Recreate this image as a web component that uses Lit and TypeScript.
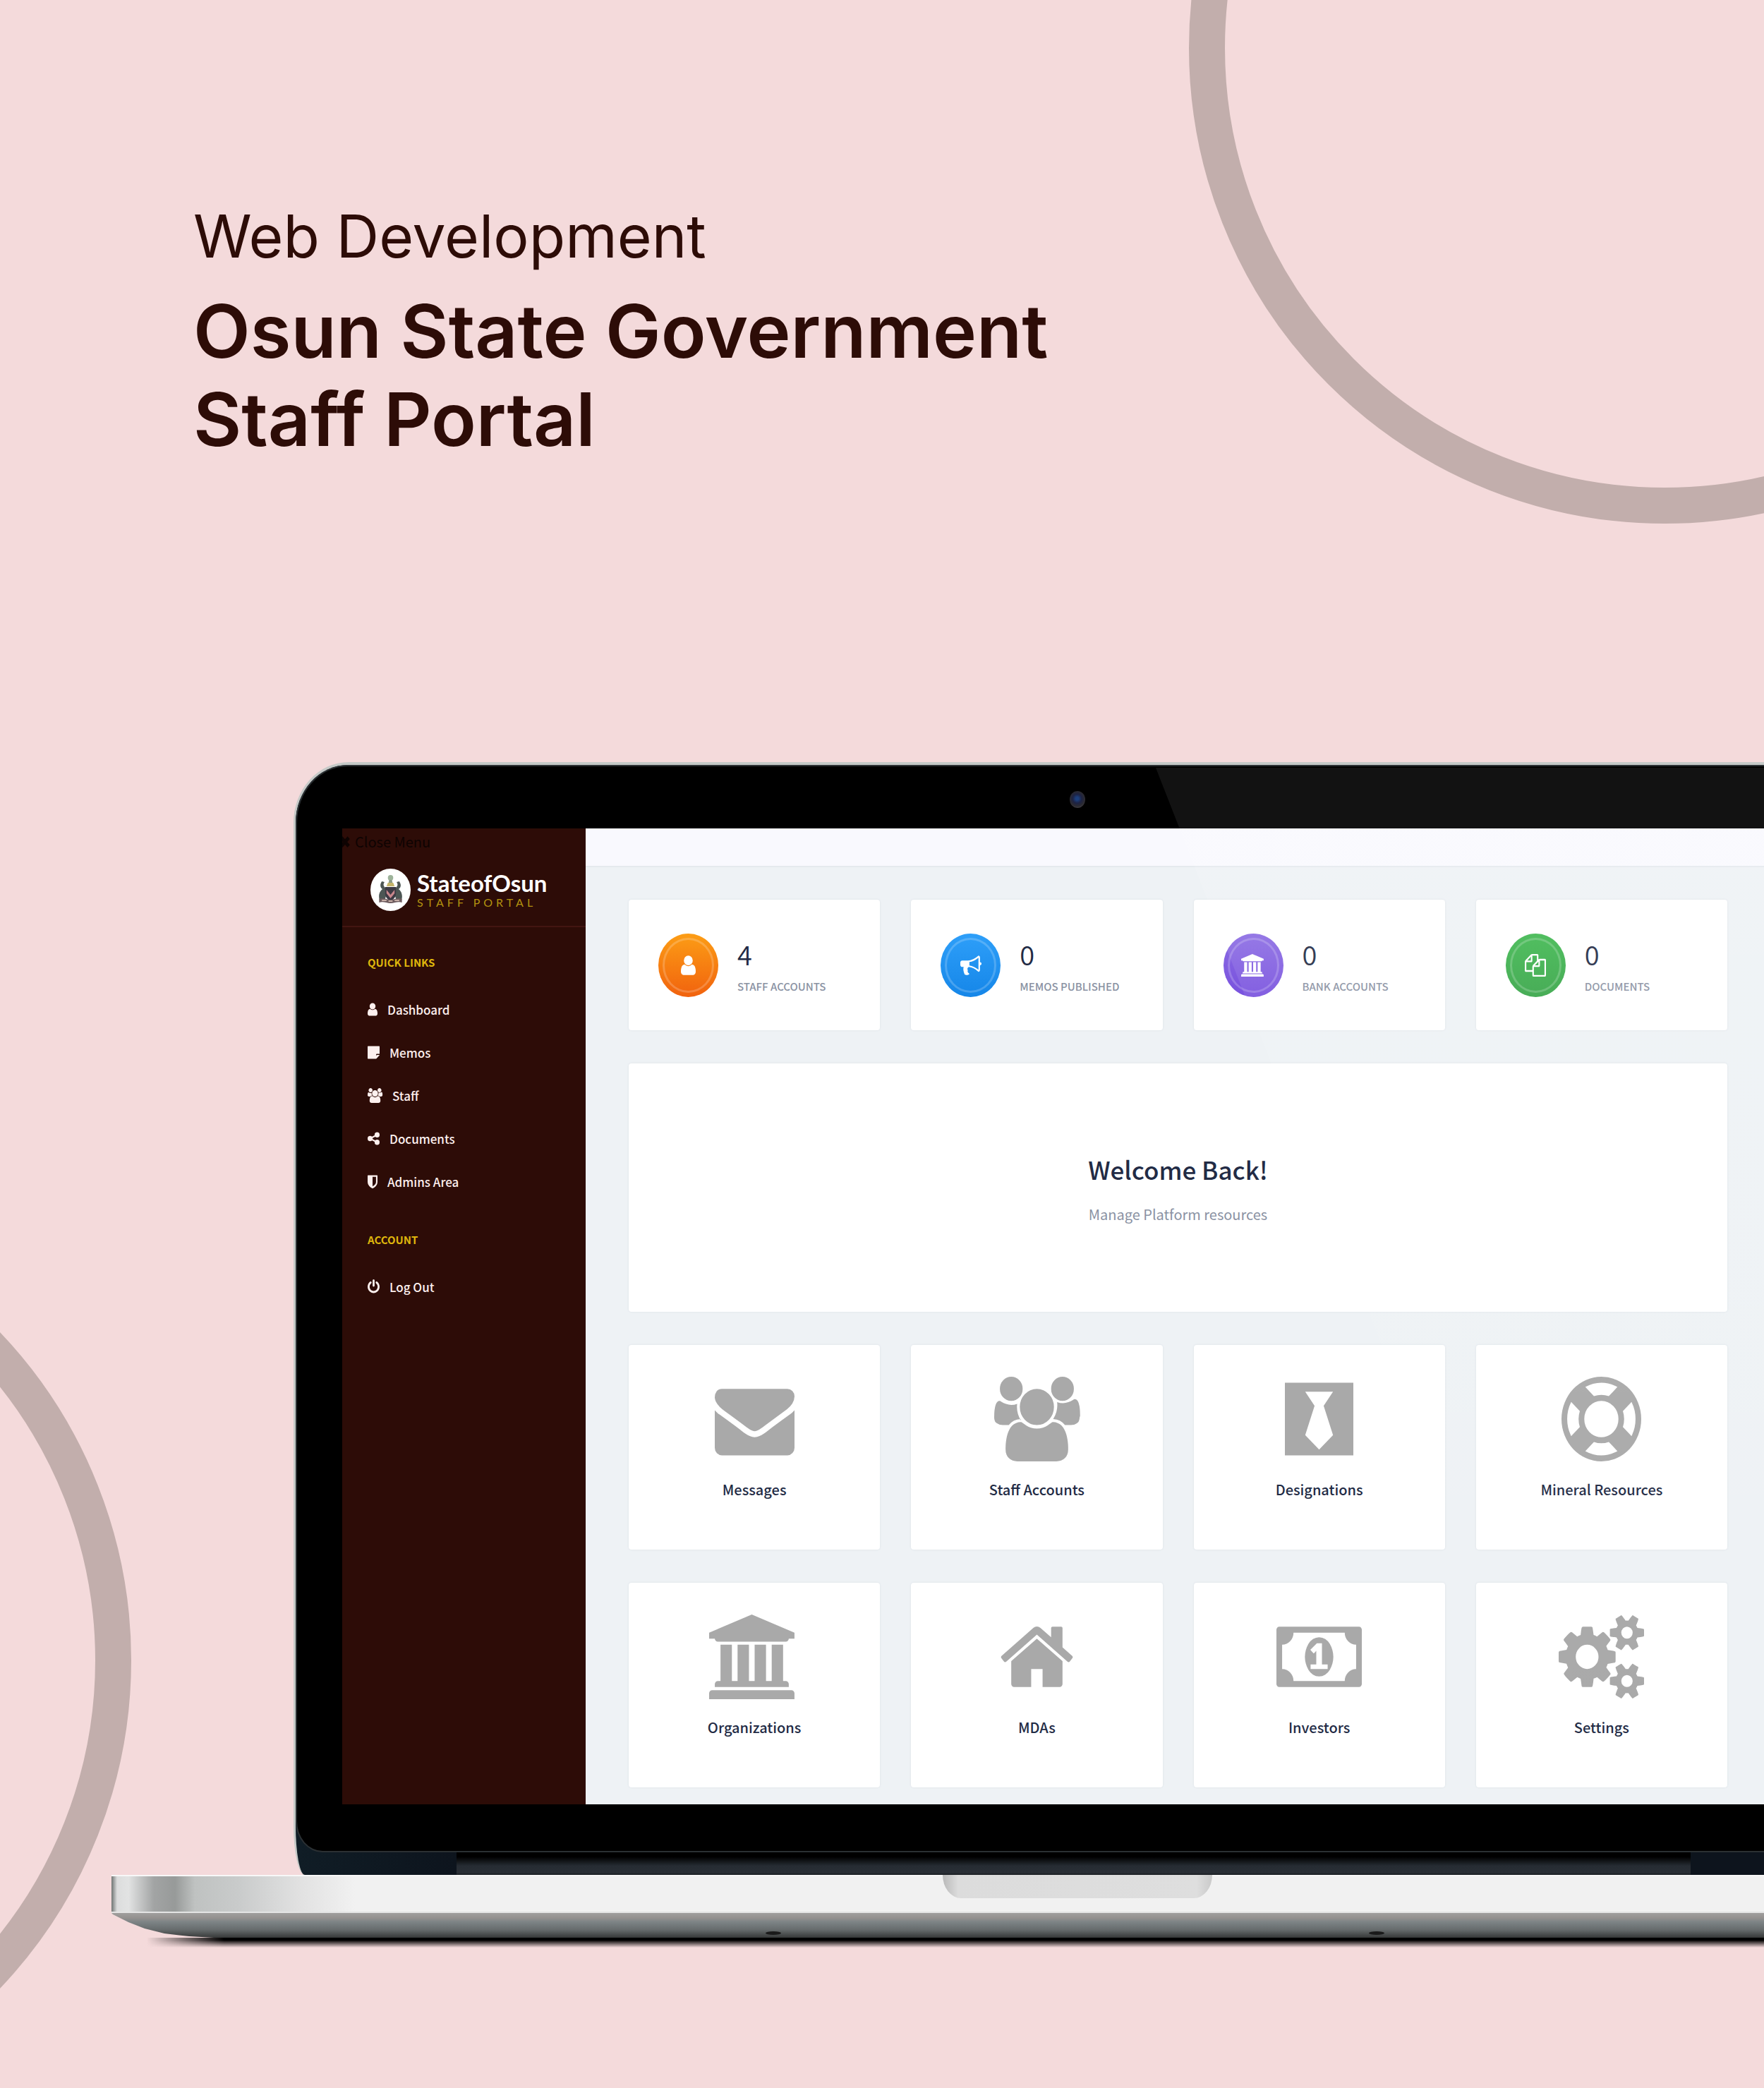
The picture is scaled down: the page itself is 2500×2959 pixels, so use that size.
import { LitElement, html, css, svg } from "lit";
import { customElement, property } from "lit/decorators.js";

/* Glyphs are drawn in a 1792-unit em; `w` is the advance width. */
const GLYPHS: Record<string, { w: number; x?: number; shape: unknown }> = {
  user: { w: 1280, x: 256, shape: svg`<path d="M1536 1399q0 109-62.5 187t-150.5 78h-854q-88 0-150.5-78t-62.5-187q0-85 8.5-160.5t31.5-152 58.5-131 94-89 134.5-34.5q131 128 313 128t313-128q76 0 134.5 34.5t94 89 58.5 131 31.5 152 8.5 160.5zm-256-887q0 159-112.5 271.5t-271.5 112.5-271.5-112.5-112.5-271.5 112.5-271.5 271.5-112.5 271.5 112.5 112.5 271.5z"/>` },
  users: { w: 1920, x: 64, shape: svg`<path d="M657 896q-162 5-265 128h-134q-82 0-138-40.5t-56-118.5q0-353 124-353 6 0 43.5 21t97.5 42.5 119 21.5q67 0 133-23-5 37-5 66 0 159 93 294zm1071 637q0 120-73 189.5t-194 69.5h-874q-121 0-194-69.5t-73-189.5q0-53 3.5-103.5t14-109 26.5-108.5 43-97.5 62-81 85.5-53.5 111.5-20q10 0 43 21.5t73 48 107 48 135 21.5 135-21.5 107-48 73-48 43-21.5q61 0 111.5 20t85.5 53.5 62 81 43 97.5 26.5 108.5 14 109 3.5 103.5zm-1024-1277q0 106-75 181t-181 75-181-75-75-181 75-181 181-75 181 75 75 181zm704 384q0 159-112.5 271.5t-271.5 112.5-271.5-112.5-112.5-271.5 112.5-271.5 271.5-112.5 271.5 112.5 112.5 271.5zm576 225q0 78-56 118.5t-138 40.5h-134q-103-123-265-128 93-135 93-294 0-29-5-66 66 23 133 23 59 0 119-21.5t97.5-42.5 43.5-21q124 0 124 353zm-128-609q0 106-75 181t-181 75-181-75-75-181 75-181 181-75 181 75 75 181z"/>` },
  bullhorn: { w: 1792, shape: svg`<path d="M1664 640q53 0 90.5 37.5t37.5 90.5-37.5 90.5-90.5 37.5v384q0 52-38 90t-90 38q-417-347-812-380-58 19-91 66t-31 100.5 40 92.5q-20 33-23 65.5t6 58 33.5 55 48 50 61.5 50.5q-29 58-111.5 83t-168.5 11.5-132-55.5q-7-23-29.5-87.5t-32-94.5-23-89-15-101 3.5-98.5 22-110.5h-122q-66 0-113-47t-47-113v-192q0-66 47-113t113-47h480q435 0 896-384 52 0 90 38t38 90v384zm-128 604v-954q-394 302-768 343v270q377 42 768 341z"/>` },
  files: { w: 1792, shape: svg`<path d="M1696 384q40 0 68 28t28 68v1216q0 40-28 68t-68 28h-960q-40 0-68-28t-28-68v-288h-544q-40 0-68-28t-28-68v-672q0-40 20-88t48-76l408-408q28-28 76-48t88-20h416q40 0 68 28t28 68v328q68-40 128-40h416zm-544 213l-299 299h299v-299zm-640-384l-299 299h299v-299zm196 647l316-316v-416h-384v416q0 40-28 68t-68 28h-416v640h512v-256q0-40 20-88t48-76zm956 804v-1152h-384v416q0 40-28 68t-68 28h-416v640h896z"/>` },
  bank: { w: 2048, shape: svg`<path d="M960 0l960 384v128h-128q0 26-20.5 45t-48.5 19h-1526q-28 0-48.5-19t-20.5-45h-128v-128zm-704 640h256v768h128v-768h256v768h128v-768h256v768h128v-768h256v768h59q28 0 48.5 19t20.5 45v64h-1664v-64q0-26 20.5-45t48.5-19h59v-768zm1595 960q28 0 48.5 19t20.5 45v128h-1920v-128q0-26 20.5-45t48.5-19h1782z"/>` },
  envelope: { w: 1792, shape: svg`<path d="M1792 710v794q0 66-47 113t-113 47h-1472q-66 0-113-47t-47-113v-794q44 49 101 87 362 246 497 345 57 42 92.5 65.5t94.5 48 110 24.5h2q51 0 110-24.5t94.5-48 92.5-65.5q170-123 498-345 57-39 100-87zm0-294q0 79-49 151t-122 123q-376 261-468 325-10 7-42.5 31t-54 38.5-52 32.5-57.5 27-50 9h-2q-23 0-50-9t-57.5-27-52-32.5-54-38.5-42.5-31q-91-64-262-182.5t-205-142.5q-62-42-117-115.5t-55-136.5q0-78 41.5-130t118.5-52h1472q65 0 112.5 47t47.5 113z"/>` },
  tie: { w: 1536, shape: svg`<path d="M0 128h1536v1536h-1536zM456 316l210 300-210 618 312 306 312-306-210-618 210-300z"/>` },
  ring: { w: 1792, shape: svg`<path d="M896 0q182 0 348 71t286 191 191 286 71 348-71 348-191 286-286 191-348 71-348-71-286-191-191-286-71-348 71-348 191-286 286-191 348-71zm0 128q-190 0-361 90l194 194q82-28 167-28t167 28l194-194q-171-90-361-90zm-678 1129l194-194q-28-82-28-167t28-167l-194-194q-90 171-90 361t90 361zm678 407q190 0 361-90l-194-194q-82 28-167 28t-167-28l-194 194q171 90 361 90zm0-384q159 0 271.5-112.5t112.5-271.5-112.5-271.5-271.5-112.5-271.5 112.5-112.5 271.5 112.5 271.5 271.5 112.5zm484-217l194 194q90-171 90-361t-90-361l-194 194q28 82 28 167t-28 167z"/>` },
  home: { w: 1792, shape: svg`<path d="M1472 992v480q0 26-19 45t-45 19h-384v-384h-256v384h-384q-26 0-45-19t-19-45v-480q0-1 .5-3t.5-3l575-474 575 474q1 2 1 6zm223-69l-62 74q-8 9-21 11h-3q-13 0-21-7l-692-577-692 577q-12 8-24 7-13-2-21-11l-62-74q-8-10-7-23.5t11-21.5l719-599q32-26 76-26t76 26l244 204v-195q0-14 9-23t23-9h192q14 0 23 9t9 23v408l219 182q10 8 11 21.5t-7 23.5z"/>` },
  money: { w: 1920, shape: svg`<path d="M768 1152h384v-96h-128v-448h-114l-148 137 77 80q42-37 55-57h2v288h-128v96zm512-256q0 70-21 142t-59.5 134-101.5 101-138 39-138-39-101.5-101-59.5-134-21-142 21-142 59.5-134 101.5-101 138-39 138 39 101.5 101 59.5 134 21 142zm512 256v-512q-106 0-181-75t-75-181h-1152q0 106-75 181t-181 75v512q106 0 181 75t75 181h1152q0-106 75-181t181-75zm128-832v1152q0 26-19 45t-45 19h-1792q-26 0-45-19t-19-45v-1152q0-26 19-45t45-19h1792q26 0 45 19t19 45z"/>` },
  cogs: { w: 1920, shape: svg`<path d="M896 896q0-106-75-181t-181-75-181 75-75 181 75 181 181 75 181-75 75-181zm768 512q0-52-38-90t-90-38-90 38-38 90q0 53 37.5 90.5t90.5 37.5 90.5-37.5 37.5-90.5zm0-1024q0-52-38-90t-90-38-90 38-38 90q0 53 37.5 90.5t90.5 37.5 90.5-37.5 37.5-90.5zm-384 421v185q0 10-7 19.5t-16 10.5l-155 24q-11 35-32 76 34 48 90 115 7 11 7 20 0 12-7 19-23 30-82.5 89.5t-78.5 59.5q-11 0-21-7l-115-90q-37 19-77 31-11 108-23 155-7 24-30 24h-186q-11 0-20-7.5t-10-17.5l-23-153q-34-10-75-31l-118 89q-7 7-20 7-11 0-21-8-144-133-144-160 0-9 7-19 10-14 41-53t47-61q-23-44-35-82l-152-24q-10-1-17-9.5t-7-19.5v-185q0-10 7-19.5t16-10.5l155-24q11-35 32-76-34-48-90-115-7-11-7-20 0-12 7-20 22-30 82-89t79-59q11 0 21 7l115 90q34-18 77-32 11-108 23-154 7-24 30-24h186q11 0 20 7.5t10 17.5l23 153q34 10 75 31l118-89q8-7 20-7 11 0 21 8 144 133 144 160 0 8-7 19-12 16-42 54t-45 60q23 48 34 82l152 23q10 2 17 10.5t7 19.5zm640 533v140q0 16-149 31-12 27-30 52 51 113 51 138 0 4-4 7-122 71-124 71-8 0-46-47t-52-68q-20 2-30 2t-30-2q-14 21-52 68t-46 47q-2 0-124-71-4-3-4-7 0-25 51-138-18-25-30-52-149-15-149-31v-140q0-16 149-31 13-29 30-52-51-113-51-138 0-4 4-7 4-2 35-20t59-34 30-16q8 0 46 46.5t52 67.5q20-2 30-2t30 2q51-71 92-112l6-2q4 0 124 70 4 3 4 7 0 25-51 138 17 23 30 52 149 15 149 31zm0-1024v140q0 16-149 31-12 27-30 52 51 113 51 138 0 4-4 7-122 71-124 71-8 0-46-47t-52-68q-20 2-30 2t-30-2q-14 21-52 68t-46 47q-2 0-124-71-4-3-4-7 0-25 51-138-18-25-30-52-149-15-149-31v-140q0-16 149-31 13-29 30-52-51-113-51-138 0-4 4-7 4-2 35-20t59-34 30-16q8 0 46 46.5t52 67.5q20-2 30-2t30 2q51-71 92-112l6-2q4 0 124 70 4 3 4 7 0 25-51 138 17 23 30 52 149 15 149 31z"/>` },
  note: { w: 1536, shape: svg`<path d="M64 128h1408q64 0 64 64v864h-352q-96 0-96 96v512h-1024q-64 0-64-64v-1408q0-64 64-64zM1216 1184h310q-14 60-50 98l-330 330q-30 30-58 44v-344q0-128 128-128z"/>` },
  share: { w: 1536, shape: svg`<path d="M320 896 1216 448M320 896 1216 1344" fill="none" stroke="currentColor" stroke-width="190"/><circle cx="320" cy="896" r="320"/><circle cx="1216" cy="448" r="320"/><circle cx="1216" cy="1344" r="320"/>` },
  shield: { w: 1280, shape: svg`<path d="M64 128h1152q64 0 64 64v768q0 260-200 470-170 180-440 298-270-118-440-298-200-210-200-470v-768q0-64 64-64zM640 320v1150q190-100 310-220 138-140 138-290v-640z"/>` },
  power: { w: 1536, x: 128, shape: svg`<path fill-rule="nonzero" d="M1664 896q0 156-61 298t-164 245-245 164-298 61-298-61-245-164-164-245-61-298q0-182 80.5-343t226.5-270q43-32 95.5-25t83.5 50q32 42 24.5 94.5t-49.5 84.5q-98 74-151.5 181t-53.5 228q0 104 40.5 198.5t109.5 163.5 163.5 109.5 198.5 40.5 198.5-40.5 163.5-109.5 109.5-163.5 40.5-198.5q0-121-53.5-228t-151.5-181q-42-32-49.5-84.5t24.5-94.5q31-43 84-50t95 25q146 109 226.5 270t80.5 343zm-640-768v640q0 52-38 90t-90 38-90-38-38-90v-640q0-52 38-90t90-38 90 38 38 90z"/>` },
  times: { w: 1408, shape: svg`<path d="M250 450 1158 1358M1158 450 250 1358" fill="none" stroke="currentColor" stroke-width="400"/>` },
};

/* `em` is the horizontal em in pixels, `high` the vertical one. */
const glyph = (name: string, em: number, high: number) => {
  const g = GLYPHS[name];
  return html`<svg
    class="glyph"
    aria-hidden="true"
    width=${Math.round((g.w / 1792) * em)}
    height=${high}
    viewBox="${g.x ?? 0} 0 ${g.w} 1792"
    preserveAspectRatio="none"
    fill="currentColor"
    fill-rule="evenodd"
  >${g.shape}</svg>`;
};

const shared = css`
  * { box-sizing: border-box; margin: 0; padding: 0; }
  a { color: inherit; text-decoration: none; }
  .glyph { display: block; flex: none; overflow: visible; }
`;

const crest = svg`
  <circle cx="30" cy="30" r="30" fill="#fff"/>
  <circle cx="30" cy="13" r="4" fill="#9db39a"/>
  <path d="M28 16h4l1 4h-6z" fill="#8b9a86"/>
  <path d="M26 20h8l2 5H24z" fill="#c4b46a"/>
  <path d="M14 46c-3-9 0-14 4-17-4-2-4-7-1-11l4 1c-3 4-1 7 3 9l1 5-4 13zM46 46c3-9 0-14-4-17 4-2 4-7 1-11l-4 1c3 4 1 7-3 9l-1 5 4 13z" fill="#4d5654"/>
  <path d="M22 26h16v9c0 6-4 9-8 11-4-2-8-5-8-11z" fill="#3d3a44"/>
  <path d="M24 30l6 7 6-7v5l-6 7-6-7z" fill="#c9868c"/>
  <path d="M13 43c6-3 11 1 17 1s11-4 17-1v5c-6-2-11 1-17 1s-11-3-17-1z" fill="#6d5b5e"/>
  <path d="M17 45h7M27 46h6M36 45h7" stroke="#c8b0a8" stroke-width="2"/>
`;

@customElement("portal-sidebar")
class PortalSidebar extends LitElement {
  static styles = [shared, css`
    :host { display: block; background: #2d0c07; color: #fff; font-family: "Noto Sans CJK SC", "Noto Sans", sans-serif; }
    .close { display: flex; align-items: center; gap: 6px; height: 38px; margin-left: -4px; border: 0; background: none; color: #0e0302; font: 20px/38px "Noto Sans CJK SC", sans-serif; }
    .brand { display: flex; align-items: center; gap: 9px; height: 102px; padding: 0 40px 2px; border-bottom: 2px solid #431511; }
    .crest { flex: none; }
    .words { padding-bottom: 2px; }
    .name { font: 700 33px/38px "Lato", sans-serif; }
    .sub { font: 16px/18px "Lato", sans-serif; letter-spacing: 5px; color: #b3920f; white-space: nowrap; }
    .group { padding: 30px 36px 2px; }
    .group h2 { font-size: 15px; line-height: 40px; font-weight: 700; color: #dfb60c; }
    .group ul { list-style: none; padding-top: 16px; }
    .link { display: flex; align-items: center; gap: 14px; height: 61px; font-size: 17px; font-weight: 500; color: #fdf0ee; }
  `];

  private group(title: string, links: [string, string][]) {
    return html`<section class="group">
      <h2>${title}</h2>
      <ul>${links.map(([icon, label]) => html`<li><a class="link" href="#">${glyph(icon, 20, 21)}<span>${label}</span></a></li>`)}</ul>
    </section>`;
  }

  render() {
    return html`
      <button class="close" type="button">${glyph("times", 20, 24)}<span>Close Menu</span></button>
      <a class="brand" href="#">
        <svg class="crest" aria-hidden="true" width="57" height="60" viewBox="0 0 60 60" preserveAspectRatio="none">${crest}</svg>
        <div class="words"><div class="name">StateofOsun</div><div class="sub">STAFF PORTAL</div></div>
      </a>
      <nav>
        ${this.group("QUICK LINKS", [["user", "Dashboard"], ["note", "Memos"], ["users", "Staff"], ["share", "Documents"], ["shield", "Admins Area"]])}
        ${this.group("ACCOUNT", [["power", "Log Out"]])}
      </nav>`;
  }
}

@customElement("stat-card")
class StatCard extends LitElement {
  @property() icon = "user";
  @property() tone = "orange";
  @property() value = "0";
  @property() label = "";

  static styles = [shared, css`
    :host { display: block; background: #fff; border-radius: 4px; box-shadow: 0 0 2px 1px #e4e9ed; font-family: "Noto Sans CJK SC", "Noto Sans", sans-serif; }
    .card { display: flex; align-items: center; gap: 27px; height: 185px; padding: 0 42px; }
    .badge { flex: none; width: 85px; height: 90px; padding: 6px; border-radius: 50%; color: #fff; }
    .rim { display: flex; align-items: center; justify-content: center; height: 100%; border: 3px solid rgba(255, 255, 255, 0.2); border-radius: 50%; }
    .orange { background: linear-gradient(#fc9d15, #f1620e); }
    .blue { background: linear-gradient(#2e9ff9, #1586e8); }
    .purple { background: linear-gradient(#8b6ce3, #7851de); }
    .green { background: linear-gradient(#40b850, #37a548); }
    .text { padding-top: 10px; }
    .value { font-size: 38px; line-height: 50px; font-weight: 350; color: #222b45; }
    .label { font-size: 15px; line-height: 42px; font-weight: 500; color: #8a92a3; white-space: nowrap; }
  `];

  render() {
    return html`<div class="card">
      <div class="badge ${this.tone}"><div class="rim">${glyph(this.icon, 30, 32)}</div></div>
      <div class="text"><div class="value">${this.value}</div><div class="label">${this.label}</div></div>
    </div>`;
  }
}

@customElement("portal-tile")
class PortalTile extends LitElement {
  @property() icon = "home";
  @property() label = "";

  static styles = [shared, css`
    :host { display: block; height: 290px; background: #fff; border-radius: 4px; box-shadow: 0 0 2px 1px #e4e9ed; font-family: "Noto Sans CJK SC", "Noto Sans", sans-serif; }
    .tile { display: flex; flex-direction: column; align-items: center; gap: 24px; height: 100%; padding-top: 45px; color: #a9a9a9; }
    .label { font-size: 20px; line-height: 32px; font-weight: 500; color: #222b45; }
  `];

  render() {
    return html`<a class="tile" href="#">${glyph(this.icon, 113, 120)}<span class="label">${this.label}</span></a>`;
  }
}

const STATS = [
  { icon: "user", tone: "orange", value: "4", label: "STAFF ACCOUNTS" },
  { icon: "bullhorn", tone: "blue", value: "0", label: "MEMOS PUBLISHED" },
  { icon: "bank", tone: "purple", value: "0", label: "BANK ACCOUNTS" },
  { icon: "files", tone: "green", value: "0", label: "DOCUMENTS" },
];

const TILES = [
  ["envelope", "Messages"], ["users", "Staff Accounts"], ["tie", "Designations"], ["ring", "Mineral Resources"],
  ["bank", "Organizations"], ["home", "MDAs"], ["money", "Investors"], ["cogs", "Settings"],
];

@customElement("app-root")
class AppRoot extends LitElement {
  static styles = [shared, css`
    :host { display: block; position: relative; overflow: hidden; min-height: 100vh; background: #f4dadb; color: #2d0c07; }
    .ring { position: absolute; width: 1348px; height: 1348px; border: 51px solid #c2aeac; border-radius: 50%; }
    .ring-top { top: -606px; right: -533px; }
    .ring-left { top: 1679px; left: -1162px; }
    .intro { position: relative; padding: 280px 274px 0; height: 1080px; }
    .kicker { font: 400 84px/110px "Inter", sans-serif; }
    .title { font: 600 105px/125px "Inter", sans-serif; padding-top: 16px; max-width: 1400px; }

    .lid { position: relative; margin-left: 416px; padding: 90px 0 100px 66px; background: linear-gradient(90deg, #101d26, #0d141d 229px, #0d141d); border-radius: 78px 0 0 16px / 86px 0 0 70px; border: solid #c5c9c7; border-width: 4px 0 0 3px; }
    .panel { position: absolute; inset: 0 0 32px 0; background: #000; border: solid #2b3033; border-width: 2px 0 2px 2px; border-radius: 74px 0 0 38px / 82px 0 0 44px; }
    .hinge { position: absolute; left: 228px; right: 104px; bottom: 0; height: 32px; background: linear-gradient(#000 20%, #262c33 60%, #2a2f36 90%, #1a1e22); }
    .camera { position: absolute; left: 53%; top: 37px; width: 22px; height: 24px; margin-left: -6px; border-radius: 50%; background: radial-gradient(circle at 48% 45%, #1c3f7c 0 12%, #1d2344 36%, #2b2a31 60%, #3c3a40 75%); }
    .glare { position: absolute; inset: 4px 0 32px 0; background: linear-gradient(rgba(255, 255, 255, 0.07), rgba(255, 255, 255, 0.07) 86px, rgba(255, 255, 255, 0.1) 86px, rgba(255, 255, 255, 0) 92%); clip-path: polygon(1219px 0, 100% 0, 100% 100%, 1820px 100%); pointer-events: none; }

    .screen { position: relative; display: grid; grid-template-columns: 345px 1fr; overflow: hidden; }
    .main { background: #eef2f5; }
    .topbar { height: 55px; background: #f9f9fe; border-bottom: 2px solid #e5eaee; }
    .grid { display: grid; grid-template-columns: repeat(4, 1fr); gap: 47px 44px; padding: 46px 52px 24px 61px; }
    .welcome { grid-column: 1 / -1; height: 352px; display: flex; flex-direction: column; align-items: center; justify-content: center; gap: 18px; padding-top: 6px; background: #fff; border-radius: 4px; box-shadow: 0 0 2px 1px #e4e9ed; font-family: "Noto Sans CJK SC", "Noto Sans", sans-serif; }
    .welcome h2 { font-size: 35px; line-height: 52px; font-weight: 500; color: #222b45; }
    .welcome p { font-size: 20px; line-height: 40px; color: #8a92a3; }

    .base { position: relative; margin-left: 158px; }
    .deck { height: 54px; background: linear-gradient(90deg, #6f7573, #dcdddd 8px, #e2e3e3 24px, #a2a4a4 60px, #979a99 90px, #bfc2c1 118px, #c9cbcb 180px, #e2e2e2 270px, #f1f1f1 345px); border-top: 2px solid #f8f8f8; border-bottom: 2px solid #e4e4e4; }
    .notch { position: absolute; left: 50.3%; top: 0; width: 382px; height: 33px; background: linear-gradient(90deg, #b9b9b9, #dcdcdc 22px, #dedede 360px, #c9c9c9); border-radius: 0 0 26px 26px / 0 0 33px 33px; }
    .under { height: 35px; background: linear-gradient(#a09f9e, #94918f 20%, #7d8486 36%, #666b6c 68%, #363838); clip-path: polygon(0 0, 100% 0, 100% 100%, 145px 100%, 110px 33px, 75px 29px, 47px 22px, 24px 13px, 2px 2px); }
    .shadow { height: 14px; margin-left: 50px; background: linear-gradient(#000 25%, rgba(0, 0, 0, 0)); mask-image: linear-gradient(90deg, transparent, #000 110px); }
    .foot { position: absolute; top: 80px; width: 22px; height: 5px; border-radius: 50%; background: #1a1a1a; }
    .foot-a { left: 39.6%; }
    .foot-b { left: 76.1%; }
  `];

  render() {
    return html`
      <div class="ring ring-top"></div>
      <div class="ring ring-left"></div>
      <header class="intro">
        <p class="kicker">Web Development</p>
        <h1 class="title">Osun State Government Staff Portal</h1>
      </header>
      <section class="lid">
        <div class="panel"></div>
        <div class="hinge"></div>
        <div class="camera"></div>
        <div class="screen">
          <portal-sidebar></portal-sidebar>
          <main class="main">
            <div class="topbar"></div>
            <div class="grid">
              ${STATS.map((s) => html`<stat-card .icon=${s.icon} .tone=${s.tone} .value=${s.value} .label=${s.label}></stat-card>`)}
              <section class="welcome"><h2>Welcome Back!</h2><p>Manage Platform resources</p></section>
              ${TILES.map(([icon, label]) => html`<portal-tile .icon=${icon} .label=${label}></portal-tile>`)}
            </div>
          </main>
        </div>
        <div class="glare"></div>
      </section>
      <div class="base">
        <div class="deck"></div>
        <div class="notch"></div>
        <div class="under"></div>
        <div class="shadow"></div>
        <div class="foot foot-a"></div>
        <div class="foot foot-b"></div>
      </div>`;
  }
}
